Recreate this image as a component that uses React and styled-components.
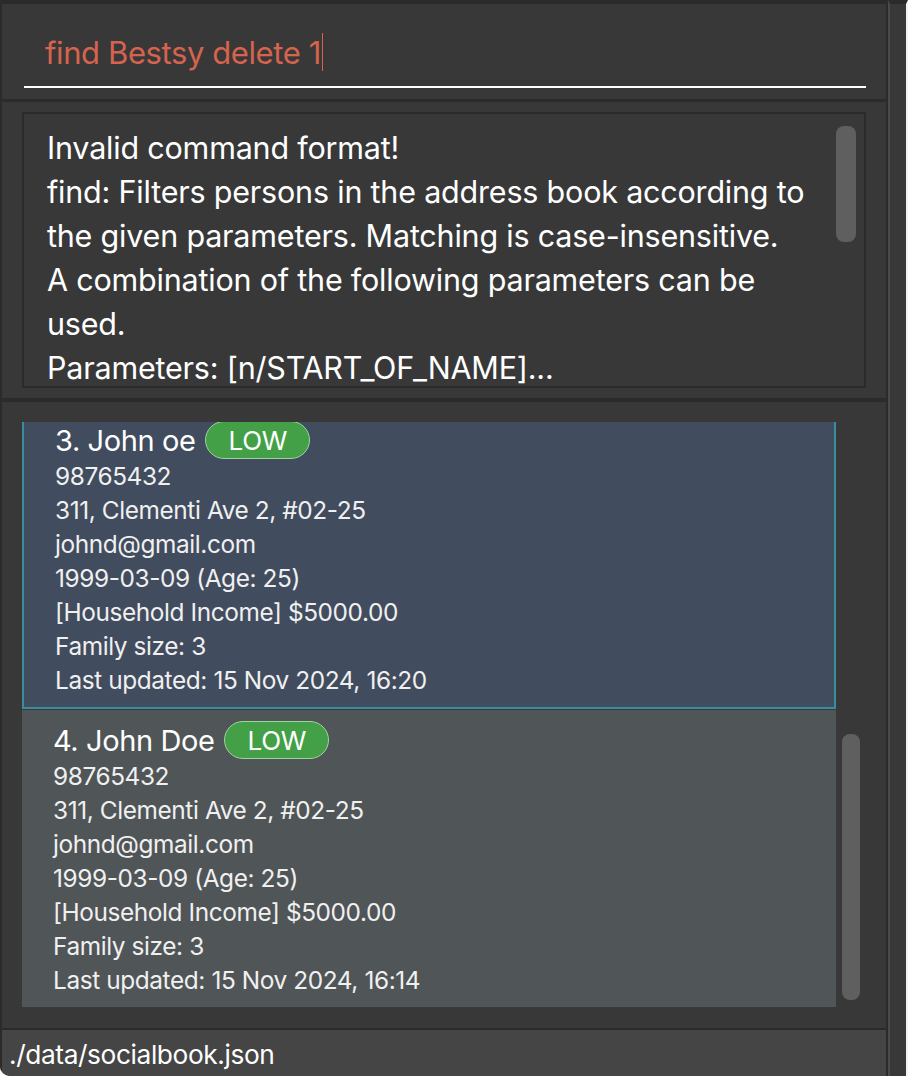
import React from 'react';
import styled, { createGlobalStyle } from 'styled-components';

const GlobalStyle = createGlobalStyle`
  html, body {
    margin: 0;
    padding: 0;
    background: #ffffff;
  }
  body {
    font-family: Inter, "Noto Sans", "Liberation Sans", sans-serif;
  }
`;

const Window = styled.div`
  width: 908px;
  height: 1076px;
  display: flex;
  background: #383838;
  overflow: hidden;
  border-bottom-left-radius: 10px;
`;

const MainColumn = styled.div`
  width: 888px;
  flex-shrink: 0;
  display: flex;
  flex-direction: column;
  box-sizing: border-box;
  border-top: 4px solid #2b2b2b;
  border-left: 2px solid #2b2b2b;
  border-right: 2px solid #2b2b2b;
`;

const SideStrip = styled.div`
  flex: 1;
  border-left: 2px solid #4a4a4a;
  border-top: 4px solid #2b2b2b;
  border-right: 2px solid #f4f4f4;
  background: #383838;
`;

const CommandPanel = styled.div`
  height: 98px;
  flex-shrink: 0;
  box-sizing: border-box;
  padding: 0 20px 11px 22px;
  border-bottom: 3px solid #2b2b2b;
  display: flex;
  flex-direction: column;
  justify-content: flex-end;
`;

const CommandInput = styled.div`
  height: 66px;
  box-sizing: border-box;
  border-bottom: 2px solid #ffffff;
  display: flex;
  align-items: center;
  padding: 0 0 4px 21px;
  font-size: 31px;
  color: #d6634e;
  letter-spacing: -0.4px;
`;

const Caret = styled.span`
  display: inline-block;
  width: 1.5px;
  height: 38px;
  margin-left: 1px;
  background: #d6634e;
`;

const ResultPanel = styled.div`
  height: 300px;
  flex-shrink: 0;
  box-sizing: border-box;
  padding: 10px 20px;
  border-bottom: 4px solid #2b2b2b;
`;

const ResultBox = styled.div`
  position: relative;
  height: 100%;
  box-sizing: border-box;
  border: 2px solid #2b2b2b;
  overflow: hidden;
  padding: 12px 40px 0 23px;
  color: #ffffff;
  font-size: 30.5px;
  line-height: 44px;
  letter-spacing: -0.2px;
`;

const ScrollThumb = styled.div`
  position: absolute;
  right: ${(p) => p.right}px;
  top: ${(p) => p.top}px;
  width: ${(p) => p.width}px;
  height: ${(p) => p.height}px;
  border-radius: 8px;
  background: #5f5f5f;
`;

const Line = styled.div`
  white-space: nowrap;
`;

const ListPanel = styled.div`
  position: relative;
  flex: 1;
  box-sizing: border-box;
  padding: 20px 50px 20px 20px;
  border-bottom: 2px solid #2b2b2b;
`;

const ListViewport = styled.div`
  height: 100%;
  overflow: hidden;
  display: flex;
  flex-direction: column;
  gap: 1px;
`;

const Card = styled.div`
  flex-shrink: 0;
  background: ${(p) => (p.selected ? '#414c5e' : '#505558')};
  border: ${(p) => (p.selected ? '2px solid #3a8d9e' : 'none')};
  border-top: none;
  margin-top: ${(p) => p.offset || 0}px;
  padding: 11px 20px 10px 31px;
  color: #f0f0f0;
`;

const NameRow = styled.div`
  display: flex;
  align-items: center;
  gap: 10px;
  height: 38px;
`;

const Name = styled.span`
  font-size: 29px;
  color: #ffffff;
  letter-spacing: -0.4px;
`;

const Badge = styled.span`
  display: inline-flex;
  align-items: center;
  justify-content: center;
  height: 38px;
  box-sizing: border-box;
  padding: 0 22px;
  border-radius: 19px;
  background: #43a047;
  border: 1.5px solid #9fd3a1;
  color: #ffffff;
  font-size: 26px;
  letter-spacing: -0.3px;
`;

const Detail = styled.div`
  font-size: 24.4px;
  line-height: 34px;
  letter-spacing: -0.4px;
  white-space: nowrap;
`;

const StatusBar = styled.div`
  height: 46px;
  flex-shrink: 0;
  background: #454545;
  display: flex;
  align-items: center;
  padding: 3px 0 0 7px;
  box-sizing: border-box;
  color: #ffffff;
  font-size: 26.3px;
  letter-spacing: -0.4px;
`;

const resultLines = [
  'Invalid command format!',
  'find: Filters persons in the address book according to',
  'the given parameters. Matching is case-insensitive.',
  'A combination of the following parameters can be',
  'used.',
  'Parameters: [n/START_OF_NAME]...',
  'Example: find n/John',
];

const persons = [
  { index: 3, name: 'John oe', priority: 'LOW', updated: '15 Nov 2024, 16:20', selected: true },
  { index: 4, name: 'John Doe', priority: 'LOW', updated: '15 Nov 2024, 16:14' },
];

const PersonCard = ({ person, offset }) => (
  <Card selected={person.selected} offset={offset}>
    <NameRow>
      <Name>{person.index}. {person.name}</Name>
      <Badge>{person.priority}</Badge>
    </NameRow>
    <Detail>98765432</Detail>
    <Detail>311, Clementi Ave 2, #02-25</Detail>
    <Detail>johnd@gmail.com</Detail>
    <Detail>1999-03-09 (Age: 25)</Detail>
    <Detail>[Household Income] $5000.00</Detail>
    <Detail>Family size: 3</Detail>
    <Detail>Last updated: {person.updated}</Detail>
  </Card>
);

export default function App() {
  return (
    <>
      <GlobalStyle />
      <Window>
        <MainColumn>
          <CommandPanel>
            <CommandInput>
              find Bestsy delete 1<Caret />
            </CommandInput>
          </CommandPanel>
          <ResultPanel>
            <ResultBox>
              {resultLines.map((l, i) => (
                <Line key={i}>{l}</Line>
              ))}
              <ScrollThumb right={8} top={12} width={20} height={116} />
            </ResultBox>
          </ResultPanel>
          <ListPanel>
            <ListViewport>
              {persons.map((p, i) => (
                <PersonCard key={p.index} person={p} offset={i === 0 ? -12 : 0} />
              ))}
            </ListViewport>
            <ScrollThumb right={26} top={332} width={18} height={266} />
          </ListPanel>
          <StatusBar>./data/socialbook.json</StatusBar>
        </MainColumn>
        <SideStrip />
      </Window>
    </>
  );
}
